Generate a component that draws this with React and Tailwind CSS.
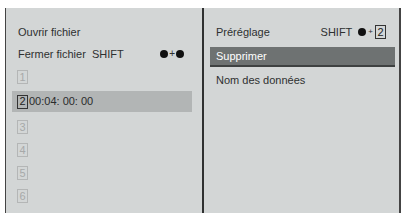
import React from "react";

function NumBox({ n, active }) {
  return (
    <span
      className={
        active
          ? "inline-flex h-[14px] w-[11px] items-center justify-center border border-[#333] text-[11px] leading-none text-[#222]"
          : "inline-flex h-[14px] w-[11px] items-center justify-center border border-[#b4b6b6] text-[11px] leading-none text-[#a7a9a9]"
      }
    >
      {n}
    </span>
  );
}

function Dot() {
  return <span className="inline-block h-[8px] w-[8px] rounded-full bg-[#111]"></span>;
}

export default function App() {
  return (
    <div
      className="h-[218px] w-[404px] bg-white pt-[8px] pl-[5px] text-[#2e3030]"
      style={{ fontFamily: '"Liberation Sans", Arial, sans-serif' }}
    >
      <div className="flex h-[205px] w-[396px] border-l border-r-2 border-[#444] bg-[#d3d6d6]">
        {/* left panel */}
        <div className="flex w-[198px] flex-col border-r-2 border-[#2f3131] pt-[14px] text-[11px]">
          <div className="flex h-[20px] items-center pl-[12px]">Ouvrir fichier</div>
          <div className="mt-[2px] flex h-[20px] items-center justify-between pl-[12px] pr-[18px]">
            <span>Fermer fichier&nbsp; SHIFT</span>
            <span className="flex items-center gap-[1px]">
              <Dot />
              <span className="text-[10px] leading-none">+</span>
              <Dot />
            </span>
          </div>
          <div className="mt-[3px] flex h-[20px] items-center pl-[11px]">
            <NumBox n="1" />
          </div>
          <div className="mt-[4px] ml-[6px] mr-[10px] flex h-[21px] items-center gap-[1px] bg-[#b2b5b5] pl-[5px]">
            <NumBox n="2" active />
            <span className="text-[#2a2c2c]">00:04: 00: 00</span>
          </div>
          <div className="mt-[5px] flex flex-col gap-[3px] pl-[11px]">
            {["3", "4", "5", "6"].map((n) => (
              <div key={n} className="flex h-[20px] items-center">
                <NumBox n={n} />
              </div>
            ))}
          </div>
        </div>

        {/* right panel */}
        <div className="flex flex-1 flex-col pt-[14px] text-[11px]">
          <div className="flex h-[20px] items-center justify-between pl-[12px] pr-[13px]">
            <span>Préréglage</span>
            <span className="flex items-center">
              <span className="mr-[6px]">SHIFT</span>
              <Dot />
              <span className="mx-[2px] text-[8px] leading-none">+</span>
              <NumBox n="2" active />
            </span>
          </div>
          <div className="mt-[5px] ml-[6px] mr-[4px] flex h-[20px] items-center border-b-2 border-[#3e4141] bg-[#6e7272] pl-[6px] text-white">
            Supprimer
          </div>
          <div className="mt-[3px] flex h-[20px] items-center pl-[12px]">Nom des données</div>
        </div>
      </div>
    </div>
  );
}
